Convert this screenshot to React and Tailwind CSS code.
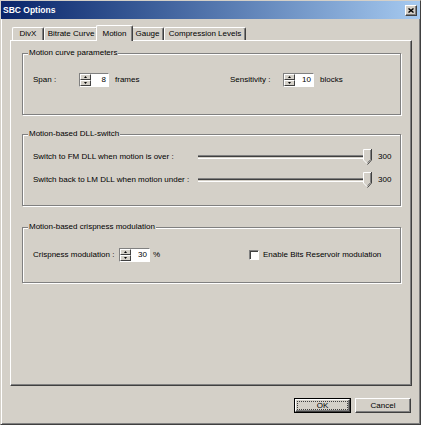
import React from 'react';

const raised =
  'border border-t-white border-l-white border-r-[#404040] border-b-[#404040] shadow-[inset_-1px_-1px_0_#808080]';
const sunken =
  'border border-t-[#808080] border-l-[#808080] border-r-white border-b-white shadow-[inset_1px_1px_0_#404040]';

function SpinHalf({ up }) {
  return (
    <div className="flex h-[6px] items-center justify-center border border-t-white border-l-white border-r-[#404040] border-b-[#404040] bg-[#D4D0C8]">
      <svg width="3" height="2" viewBox="0 0 3 2">
        <path d={up ? 'M1.5 0L3 2H0Z' : 'M0 0H3L1.5 2Z'} fill="#000" />
      </svg>
    </div>
  );
}

function Spinner({ value, width = 'w-[30px]' }) {
  return (
    <div className={`flex h-[14px] ${width} ${sunken}`}>
      <div className="flex w-[11px] flex-col">
        <SpinHalf up />
        <SpinHalf />
      </div>
      <div className="flex flex-1 items-center justify-end bg-white pr-[2px]">{value}</div>
    </div>
  );
}

function Slider() {
  return (
    <div className="flex h-[16px] w-[174px] items-center">
      <div className="h-[4px] flex-1 border-y border-t-[#808080] border-b-white shadow-[inset_0_1px_0_#404040]" />
      <svg width="9" height="16" viewBox="0 0 9 16" className="-ml-[4px] shrink-0">
        <path d="M0 0H9V11L4.5 15.5L0 11Z" fill="#D4D0C8" />
        <path d="M0.5 11V0.5H8" stroke="#fff" fill="none" />
        <path d="M0.5 11L4 14.5" stroke="#fff" fill="none" />
        <path d="M8.5 0V11L4.5 15.5" stroke="#404040" fill="none" />
        <path d="M7.5 1V10.6L4.5 13.6" stroke="#808080" fill="none" />
      </svg>
    </div>
  );
}

function Group({ title, className, children }) {
  return (
    <fieldset
      className={`border border-[#808080] shadow-[inset_1px_1px_0_#fff,1px_1px_0_#fff] ${className}`}
    >
      <legend className="ml-[5px] bg-[#D4D0C8] px-[1px] leading-[10px]">{title}</legend>
      {children}
    </fieldset>
  );
}

const tabs = [
  { label: 'DivX', w: 'w-[32px]' },
  { label: 'Bitrate Curve', w: 'w-[54px]' },
  { label: 'Motion', w: 'w-[37px]', active: true },
  { label: 'Gauge', w: 'w-[33px]' },
  { label: 'Compression Levels', w: 'w-[82px]' },
];

export default function App() {
  return (
    <div className="h-[425px] w-[421px] overflow-hidden bg-[#D4D0C8] font-['Liberation_Sans',Arial,sans-serif] text-[8px] text-black">
      <div className="flex h-full flex-col border border-t-[#D4D0C8] border-l-[#D4D0C8] border-r-[#404040] border-b-[#404040] shadow-[inset_1px_1px_0_#fff,inset_-1px_-1px_0_#808080]">
        {/* Title bar */}
        <div className="flex h-[18px] items-center justify-between bg-linear-to-r from-[#0A246A] to-[#A6CAF0] pl-[2px] pr-[3px]">
          <span className="text-[8.5px] font-bold text-white">SBC Options</span>
          <div className={`flex h-[11px] w-[12px] items-center justify-center bg-[#D4D0C8] ${raised}`}>
            <svg width="6" height="5" viewBox="0 0 6 5">
              <path d="M0.5 0.5L5.5 4.5M5.5 0.5L0.5 4.5" stroke="#000" strokeWidth="1.4" />
            </svg>
          </div>
        </div>

        {/* Tabs */}
        <div className="mt-[6px] flex items-end pl-[11px]">
          {tabs.map((t) =>
            t.active ? (
              <div
                key={t.label}
                className={`relative z-10 -mx-[2px] -mb-[1px] flex h-[16px] ${t.w} items-center justify-center rounded-t-[2px] border-t border-l border-r border-t-white border-l-white border-r-[#404040] bg-[#D4D0C8] shadow-[inset_-1px_0_0_#808080]`}
              >
                {t.label}
              </div>
            ) : (
              <div
                key={t.label}
                className={`flex h-[13px] ${t.w} items-center justify-center rounded-t-[2px] border-t border-l border-r border-t-white border-l-white border-r-[#404040] shadow-[inset_-1px_0_0_#808080]`}
              >
                {t.label}
              </div>
            )
          )}
        </div>

        {/* Panel */}
        <div className={`ml-[9px] flex h-[346px] w-[402px] flex-col pl-[11px] pr-[10px] pt-[7px] ${raised}`}>
          <Group title="Motion curve parameters" className="h-[67px]">
            <div className="flex items-center pl-[10px] pt-[15px]">
              <div className="flex w-[197px] items-center">
                <span className="w-[46px]">Span :</span>
                <Spinner value="8" />
                <span className="ml-[6px]">frames</span>
              </div>
              <div className="flex items-center">
                <span className="w-[53px]">Sensitivity :</span>
                <Spinner value="10" width="w-[31px]" />
                <span className="ml-[6px]">blocks</span>
              </div>
            </div>
          </Group>

          <Group title="Motion-based DLL-switch" className="mt-[14px] h-[77px]">
            <div className="flex flex-col gap-[7px] pl-[10px] pt-[10px]">
              <div className="flex h-[16px] items-center">
                <span className="w-[165px]">Switch to FM DLL when motion is over :</span>
                <Slider />
                <span className="ml-[6px]">300</span>
              </div>
              <div className="flex h-[16px] items-center">
                <span className="w-[165px]">Switch back to LM DLL when motion under :</span>
                <Slider />
                <span className="ml-[6px]">300</span>
              </div>
            </div>
          </Group>

          <Group title="Motion-based crispness modulation" className="mt-[16px] h-[61px]">
            <div className="flex items-center pl-[10px] pt-[16px]">
              <div className="flex w-[216px] items-center">
                <span className="w-[86px]">Crispness modulation :</span>
                <Spinner value="30" width="w-[31px]" />
                <span className="ml-[3px]">%</span>
              </div>
              <div className="flex items-center">
                <div className={`h-[10px] w-[10px] bg-white ${sunken}`} />
                <span className="ml-[4px]">Enable Bits Reservoir modulation</span>
              </div>
            </div>
          </Group>
        </div>

        {/* Buttons */}
        <div className="mt-[12px] flex justify-end gap-[4px] pr-[9px]">
          <div className="h-[15px] w-[57px] border border-black">
            <div className={`flex h-full p-[1px] ${raised}`}>
              <div className="flex flex-1 items-center justify-center border border-dotted border-[#404040] leading-none">
                OK
              </div>
            </div>
          </div>
          <div className={`flex h-[15px] w-[56px] items-center justify-center ${raised}`}>Cancel</div>
        </div>
      </div>
    </div>
  );
}
